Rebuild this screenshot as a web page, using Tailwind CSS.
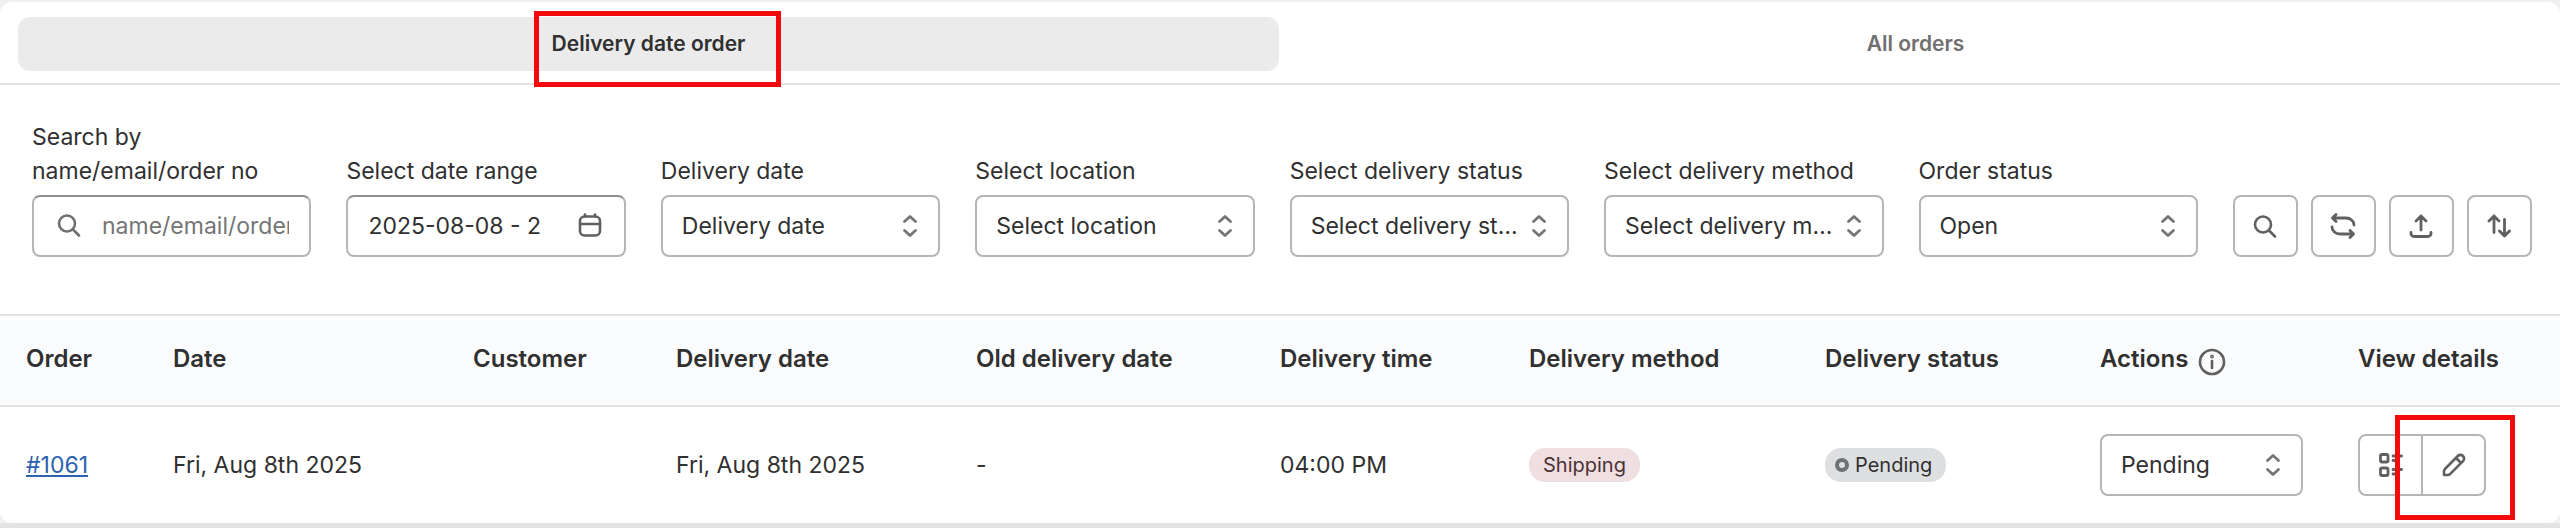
<!DOCTYPE html>
<html lang="en">
  <head>
    <meta charset="utf-8" />
    <meta name="viewport" content="width=device-width, initial-scale=1" />
    <title>Delivery date orders</title>
    <script src="https://cdn.jsdelivr.net/npm/@tailwindcss/browser@4"></script>
  </head>
  <body class="bg-[#e3e3e5] text-[#303030]" style='font-family: Inter, "Liberation Sans", sans-serif;'>
    <svg class="hidden">
      <symbol id="chevrons" viewBox="0 0 16 24"><path d="M2.500 7.500l5.500-5 5.500 5M2.500 16.500l5.500 5 5.500-5" fill="none" stroke="currentColor" stroke-width="2.800" stroke-linecap="round" stroke-linejoin="round" /></symbol>
      <symbol id="search" viewBox="0 0 24 24"><path d="M10 2.500a8 8 0 1 0 0 16a8 8 0 0 0 0-16zM16 16.500l6 6" fill="none" stroke="currentColor" stroke-width="2.600" stroke-linecap="round" /></symbol>
    </svg>
    <div class="border-t-2 border-[#f0f0f0] bg-[#f0f0f0]">
      <main class="rounded-xl bg-white text-[23px]">
        <!-- Tabs -->
        <div role="tablist" class="flex gap-1.5 border-b-2 border-[#e3e3e3] pt-[15px] pr-3.5 pb-3 pl-[18px]">
          <button role="tab" aria-selected="true" class="relative h-[54px] flex-1 rounded-xl bg-[#ebebeb] text-[21px] font-semibold">
            Delivery date order
            <span class="absolute -top-1.5 left-[516px] h-[76px] w-[247px] border-5 border-[#f30b0b]"></span>
          </button>
          <button role="tab" aria-selected="false" class="h-[54px] flex-1 rounded-xl text-[21px] font-semibold text-[#707070]">All orders</button>
        </div>

        <!-- Filters -->
        <form class="flex items-end gap-[35px] pt-[35px] pr-7 pb-[57px] pl-8">
          <div class="min-w-0 flex-1">
            <label for="search-input" class="mb-[7px] block leading-[34px]">Search by name/email/order no</label>
            <div class="relative">
              <svg class="absolute top-[18px] left-[25px] size-6 text-[#707070]"><use href="#search" /></svg>
              <div class="flex h-[62px] rounded-lg border-2 border-[#b5b5b5] border-t-[#8f8f8f] pr-5 pl-[68px]">
                <input id="search-input" type="text" placeholder="name/email/order no" class="w-full min-w-0 outline-none placeholder:text-[#757575]" />
              </div>
            </div>
          </div>
          <div class="min-w-0 flex-1">
            <label for="date-range" class="mb-[7px] block leading-[34px]">Select date range</label>
            <div class="relative">
              <div class="flex h-[62px] rounded-lg border-2 border-[#b5b5b5] border-t-[#8f8f8f] pr-14 pl-5">
                <input id="date-range" type="text" value="2025-08-08 - 2" class="w-full min-w-0 outline-none" />
              </div>
              <svg class="absolute top-[18px] right-6 size-6 text-[#606060]" viewBox="0 0 24 24" fill="none" stroke="currentColor" stroke-width="2.600" stroke-linecap="round"><rect x="2" y="3.500" width="20" height="19" rx="4.500" /><path d="M2 11h20M7 1.500v2M17 1.500v2" /></svg>
            </div>
          </div>
          <div class="min-w-0 flex-1">
            <label for="delivery-date" class="mb-[7px] block leading-[34px]">Delivery date</label>
            <div class="relative">
              <select id="delivery-date" class="h-[62px] w-full appearance-none rounded-lg border-2 border-[#b5b5b5] bg-white pr-12 pl-[19px] text-ellipsis"><option>Delivery date</option></select>
              <svg class="pointer-events-none absolute top-[19px] right-[22px] h-6 w-4 text-[#757575]"><use href="#chevrons" /></svg>
            </div>
          </div>
          <div class="min-w-0 flex-1">
            <label for="location" class="mb-[7px] block leading-[34px]">Select location</label>
            <div class="relative">
              <select id="location" class="h-[62px] w-full appearance-none rounded-lg border-2 border-[#b5b5b5] bg-white pr-12 pl-[19px] text-ellipsis"><option>Select location</option></select>
              <svg class="pointer-events-none absolute top-[19px] right-[22px] h-6 w-4 text-[#757575]"><use href="#chevrons" /></svg>
            </div>
          </div>
          <div class="min-w-0 flex-1">
            <label for="delivery-status" class="mb-[7px] block leading-[34px] whitespace-nowrap">Select delivery status</label>
            <div class="relative">
              <select id="delivery-status" class="h-[62px] w-full appearance-none rounded-lg border-2 border-[#b5b5b5] bg-white pr-12 pl-[19px] text-ellipsis"><option>Select delivery status</option></select>
              <svg class="pointer-events-none absolute top-[19px] right-[22px] h-6 w-4 text-[#757575]"><use href="#chevrons" /></svg>
            </div>
          </div>
          <div class="min-w-0 flex-1">
            <label for="delivery-method" class="mb-[7px] block leading-[34px] whitespace-nowrap">Select delivery method</label>
            <div class="relative">
              <select id="delivery-method" class="h-[62px] w-full appearance-none rounded-lg border-2 border-[#b5b5b5] bg-white pr-12 pl-[19px] text-ellipsis"><option>Select delivery method</option></select>
              <svg class="pointer-events-none absolute top-[19px] right-[22px] h-6 w-4 text-[#757575]"><use href="#chevrons" /></svg>
            </div>
          </div>
          <div class="min-w-0 flex-1">
            <label for="order-status" class="mb-[7px] block leading-[34px]">Order status</label>
            <div class="relative">
              <select id="order-status" class="h-[62px] w-full appearance-none rounded-lg border-2 border-[#b5b5b5] bg-white pr-12 pl-[19px] text-ellipsis"><option>Open</option></select>
              <svg class="pointer-events-none absolute top-[19px] right-[22px] h-6 w-4 text-[#757575]"><use href="#chevrons" /></svg>
            </div>
          </div>
          <div class="flex gap-[13px] text-[#606060]">
            <button type="button" aria-label="Search" class="flex h-[62px] w-[65px] items-center justify-center rounded-lg border-2 border-[#b5b5b5]">
              <svg class="size-6"><use href="#search" /></svg>
            </button>
            <button type="button" aria-label="Reset" class="flex h-[62px] w-[65px] items-center justify-center rounded-lg border-2 border-[#b5b5b5]">
              <svg class="size-[26px]" viewBox="0 0 26 26" fill="none" stroke="currentColor" stroke-width="2.800" stroke-linecap="round" stroke-linejoin="round"><path d="M6 1.500L2.500 5 6 8.500M3 5h13a8 7 0 0 1 8 7M20 17.500l3.500 3.500-3.500 3.500M23 21H10a8 7 0 0 1-8-7" /></svg>
            </button>
            <button type="button" aria-label="Export" class="flex h-[62px] w-[65px] items-center justify-center rounded-lg border-2 border-[#b5b5b5]">
              <svg class="size-6" viewBox="0 0 24 24" fill="none" stroke="currentColor" stroke-width="2.800" stroke-linecap="round" stroke-linejoin="round"><path d="M12 16V2M7 7l5-5 5 5M2 18.500v1a3 3 0 0 0 3 3h14a3 3 0 0 0 3-3v-1" /></svg>
            </button>
            <button type="button" aria-label="Sort" class="flex h-[62px] w-[65px] items-center justify-center rounded-lg border-2 border-[#b5b5b5]">
              <svg class="size-6" viewBox="0 0 24 24" fill="none" stroke="currentColor" stroke-width="2.800" stroke-linecap="round" stroke-linejoin="round"><path d="M7 18.500V2M2 7l5-5 5 5M17.500 5.500V22M12.500 17l5 5 5-5" /></svg>
            </button>
          </div>
        </form>

        <!-- Orders -->
        <table class="w-full table-fixed text-left whitespace-nowrap">
          <thead class="border-y-2 border-[#e3e3e3] bg-[#fafbfc] text-2xl">
            <tr class="h-[91px]">
              <th class="w-[147px] pb-1 pl-[26px] font-semibold">Order</th>
              <th class="w-[300px] pb-1 pl-[26px] font-semibold">Date</th>
              <th class="w-[203px] pb-1 pl-[26px] font-semibold">Customer</th>
              <th class="w-[300px] pb-1 pl-[26px] font-semibold">Delivery date</th>
              <th class="w-[304px] pb-1 pl-[26px] font-semibold">Old delivery date</th>
              <th class="w-[249px] pb-1 pl-[26px] font-semibold">Delivery time</th>
              <th class="w-[296px] pb-1 pl-[26px] font-semibold">Delivery method</th>
              <th class="w-[275px] pb-1 pl-[26px] font-semibold">Delivery status</th>
              <th class="w-[258px] pb-1 pl-[26px] font-semibold">
                <span class="flex items-center gap-2.5">
                  Actions
                  <svg class="mt-1.5 size-7 text-[#606060]" viewBox="0 0 28 28" fill="none" stroke="currentColor" stroke-width="2.600" stroke-linecap="round"><circle cx="14" cy="14" r="12" /><path d="M14 13v7" /><circle cx="14" cy="8.500" r=".6" fill="currentColor" /></svg>
                </span>
              </th>
              <th class="w-[228px] pb-1 pl-[26px] font-semibold">View details</th>
            </tr>
          </thead>
          <tbody>
            <tr class="h-[117px]">
              <td class="pl-[26px]"><a href="#1061" class="text-[#2c62b0] underline">#1061</a></td>
              <td class="pl-[26px]">Fri, Aug 8th 2025</td>
              <td class="pl-[26px]"></td>
              <td class="pl-[26px]">Fri, Aug 8th 2025</td>
              <td class="pl-[26px]">-</td>
              <td class="pl-[26px]">04:00 PM</td>
              <td class="pl-[26px]"><span class="flex h-[34px] w-fit items-center rounded-2xl bg-[#f0dfe1] px-3.5 text-xl text-[#4a3336]">Shipping</span></td>
              <td class="pl-[26px]">
                <span class="flex h-[34px] w-fit items-center gap-1.5 rounded-2xl bg-[#dedfe1] pr-3.5 pl-2.5 text-xl"><i class="size-3.5 rounded-full border-4 border-[#6d7175]"></i>Pending</span>
              </td>
              <td class="pl-[26px]">
                <div class="relative w-[203px]">
                  <select aria-label="Action" class="h-[62px] w-full appearance-none rounded-lg border-2 border-[#b5b5b5] bg-white pr-12 pl-[19px]"><option>Pending</option></select>
                  <svg class="pointer-events-none absolute top-[19px] right-[22px] h-6 w-4 text-[#757575]"><use href="#chevrons" /></svg>
                </div>
              </td>
              <td class="pl-[26px]">
                <div class="relative flex h-[62px] w-32 rounded-lg border-2 border-[#b5b5b5] text-[#606060]">
                  <button aria-label="View order" class="flex flex-1 items-center justify-center border-r-2 border-[#b5b5b5]">
                    <svg class="size-6" viewBox="0 0 24 24" fill="none" stroke="currentColor" stroke-width="2.800" stroke-linecap="round"><rect x="1.500" y="1.500" width="7.500" height="7.500" rx="1.500" /><rect x="1.500" y="15" width="7.500" height="7.500" rx="1.500" /><path d="M14 3h8.500M14 7.500h5M14 16.500h8.500M14 21h5" /></svg>
                  </button>
                  <button aria-label="Edit order" class="flex flex-1 items-center justify-center">
                    <svg class="size-6" viewBox="0 0 24 24" fill="none" stroke="currentColor" stroke-width="2.600" stroke-linecap="round" stroke-linejoin="round"><path d="M2 22v-3.500a4 4 0 0 1 1.200-2.800L15.800 3a3.600 3.600 0 0 1 5.200 5.200L8.300 20.800A4 4 0 0 1 5.500 22zM14 5l5 5" /></svg>
                  </button>
                  <span class="absolute -top-[21px] left-[35px] h-[105px] w-[120px] border-5 border-[#f30b0b]"></span>
                </div>
              </td>
            </tr>
          </tbody>
        </table>
      </main>
    </div>
  </body>
</html>
